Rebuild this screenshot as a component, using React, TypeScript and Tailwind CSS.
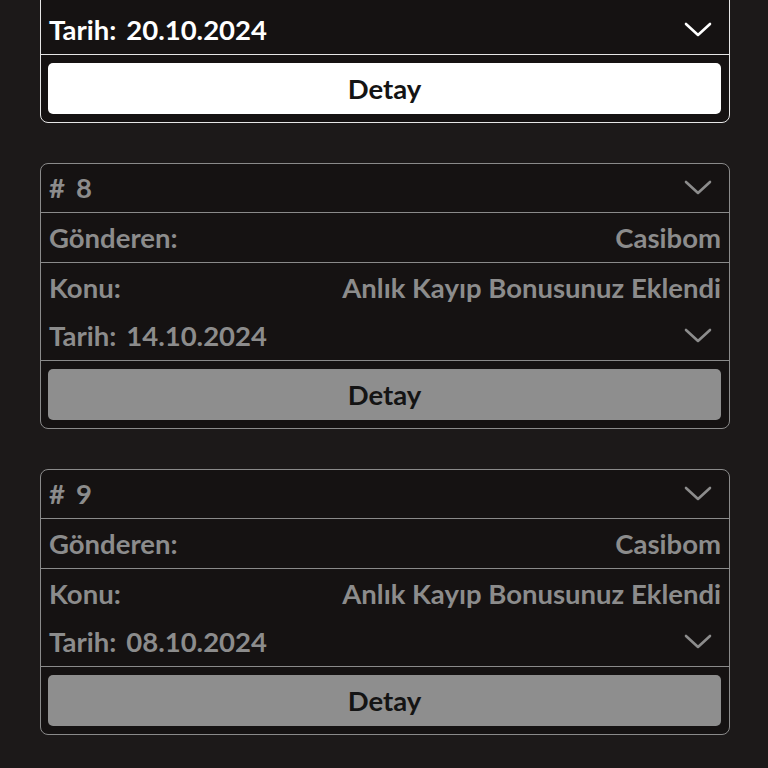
import React from "react";

type Msg = { id: number; sender: string; subject: string; date: string; active?: boolean };

const msgs: Msg[] = [
  { id: 7, sender: "Casibom", subject: "Anlık Kayıp Bonusunuz Eklendi", date: "20.10.2024", active: true },
  { id: 8, sender: "Casibom", subject: "Anlık Kayıp Bonusunuz Eklendi", date: "14.10.2024" },
  { id: 9, sender: "Casibom", subject: "Anlık Kayıp Bonusunuz Eklendi", date: "08.10.2024" },
];

function Chevron({ active }: { active?: boolean }) {
  return (
    <svg width="30" height="18" viewBox="0 0 30 18" fill="none" className={active ? "text-white" : "text-[#8c8c8c]"}>
      <path d="M3 3 L15 14 L27 3" stroke="currentColor" strokeWidth="2.6" strokeLinecap="round" strokeLinejoin="round" />
    </svg>
  );
}

function Card({ m, first }: { m: Msg; first?: boolean }) {
  const text = m.active ? "text-white" : "text-[#8c8c8c]";
  const border = m.active ? "border-[#e6e6e6]" : "border-[#8a8a8a]";
  return (
    <div className={`w-[690px] rounded-lg border bg-[#151212] ${border} ${text} ${first ? "-mt-[143px]" : "mt-[40px]"}`}>
      <div className={`flex h-[49px] items-center justify-between border-b pl-2 pr-[16px] ${border}`}>
        <span>
          #<span className="ml-[11px]">{m.id}</span>
        </span>
        <Chevron active={m.active} />
      </div>
      <div className={`flex h-[50px] items-center justify-between border-b px-2 ${border}`}>
        <span>Gönderen:</span>
        <span>{m.sender}</span>
      </div>
      <div className="flex h-[49px] items-center justify-between px-2">
        <span>Konu:</span>
        <span>{m.subject}</span>
      </div>
      <div className={`flex h-[49px] items-center justify-between border-b pl-2 pr-[16px] ${border}`}>
        <span>
          Tarih:<span className="ml-[10px]">{m.date}</span>
        </span>
        <Chevron active={m.active} />
      </div>
      <div className="pb-[8px] pl-[7px] pr-[8px] pt-[8px]">
        <button
          className={`flex h-[51px] w-full items-center justify-center rounded-[5px] text-[#141414] ${
            m.active ? "bg-white" : "bg-[#8e8e8e]"
          }`}
        >
          Detay
        </button>
      </div>
    </div>
  );
}

export default function App() {
  return (
    <div
      className="h-[768px] w-[768px] overflow-hidden bg-[#1c1919] text-[27.5px] font-bold"
      style={{ fontFamily: "Lato, 'Noto Sans', sans-serif" }}
    >
      <div className="pl-[40px]">
        {msgs.map((m, i) => (
          <Card key={m.id} m={m} first={i === 0} />
        ))}
      </div>
    </div>
  );
}
